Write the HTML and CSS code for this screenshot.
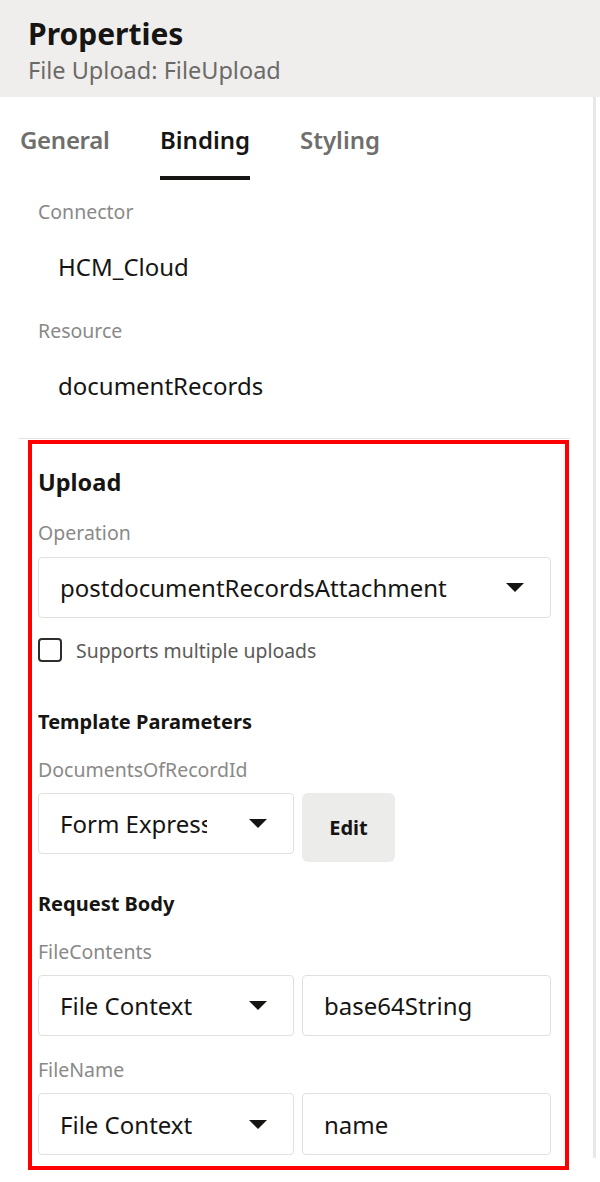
FILE: index.html
```html
<!DOCTYPE html>
<html>
<head>
<meta charset="utf-8">
<link rel="stylesheet" href="styles.css">
</head>
<body>
<div class="header">
  <div class="title">Properties</div>
  <div class="subtitle">File Upload: FileUpload</div>
</div>
<div class="tabs">
  <div class="tab">General</div>
  <div class="tab active">Binding</div>
  <div class="tab">Styling</div>
</div>
<div class="binding">
  <div class="field">
    <div class="label first">Connector</div>
    <div class="value">HCM_Cloud</div>
  </div>
  <div class="field">
    <div class="label">Resource</div>
    <div class="value">documentRecords</div>
  </div>
  <div class="divider"></div>
  <div class="upload">
    <div class="section-title">Upload</div>
    <div class="label op">Operation</div>
    <div class="select wide">
      <span class="select-text">postdocumentRecordsAttachment</span>
      <svg class="arrow" width="18" height="9" viewBox="0 0 18 9"><polygon points="0,0 18,0 9,9" fill="#161513"/></svg>
    </div>
    <label class="check-row">
      <span class="checkbox"></span>
      <span class="check-label">Supports multiple uploads</span>
    </label>
    <div class="sub-title tp">Template Parameters</div>
    <div class="label sm">DocumentsOfRecordId</div>
    <div class="row">
      <div class="select half">
        <span class="select-text clip">Form Expression</span>
        <svg class="arrow" width="18" height="9" viewBox="0 0 18 9"><polygon points="0,0 18,0 9,9" fill="#161513"/></svg>
      </div>
      <div class="button">Edit</div>
    </div>
    <div class="sub-title rb">Request Body</div>
    <div class="label sm">FileContents</div>
    <div class="row">
      <div class="select half">
        <span class="select-text">File Context</span>
        <svg class="arrow" width="18" height="9" viewBox="0 0 18 9"><polygon points="0,0 18,0 9,9" fill="#161513"/></svg>
      </div>
      <div class="input">base64String</div>
    </div>
    <div class="label sm fn">FileName</div>
    <div class="row last">
      <div class="select half">
        <span class="select-text">File Context</span>
        <svg class="arrow" width="18" height="9" viewBox="0 0 18 9"><polygon points="0,0 18,0 9,9" fill="#161513"/></svg>
      </div>
      <div class="input">name</div>
    </div>
  </div>
</div>
<div class="scroll-track"></div>
</body>
</html>
```

FILE: styles.css
```css
* { box-sizing: border-box; }
html, body { margin: 0; padding: 0; background: #fff; }
body {
  width: 600px;
  height: 1182px;
  position: relative;
  font-family: "Noto Sans", "Open Sans", sans-serif;
  color: #161513;
  overflow: hidden;
}
.header {
  height: 97px;
  background: #efeeec;
  padding: 15px 28px 0 28px;
}
.title {
  font-size: 30px;
  font-weight: 700;
  line-height: 38px;
  color: #161513;
}
.subtitle {
  font-size: 23.5px;
  line-height: 32px;
  margin-top: 1px;
  color: #6b6a68;
}
.tabs {
  display: grid;
  grid-template-columns: repeat(3, 140px);
  justify-items: start;
  padding-left: 20px;
  height: 83px;
}
.tab {
  font-size: 24px;
  font-weight: 600;
  line-height: 30px;
  padding-top: 28px;
  padding-bottom: 21px;
  color: #6f6e6c;
  border-bottom: 4px solid transparent;
}
.tab:first-child { letter-spacing: -0.3px; }
.tab.active {
  color: #161513;
  border-bottom-color: #161513;
}
.binding {
  margin-left: 18px;
  width: 552px;
}
.field { padding-left: 20px; }
.label {
  font-size: 19.5px;
  line-height: 24px;
  color: #8a8988;
  margin-top: 37px;
}
.label.first { margin-top: 20px; }
.value {
  font-size: 24px;
  line-height: 30px;
  margin-top: 28px;
  padding-left: 20px;
}
.divider {
  height: 1px;
  background: #e4e3e1;
  margin-top: 37px;
}
.upload {
  margin: 1px 1px 0 10px;
  border: 4px solid #ff0000;
  padding: 24px 14px 11px 6px;
}
.section-title {
  font-size: 23.5px;
  font-weight: 700;
  line-height: 28px;
}
.label.op { margin-top: 25px; }
.label.sm { margin-top: 23px; }
.label.fn { margin-top: 22px; }
.select {
  display: flex;
  align-items: center;
  justify-content: space-between;
  border: 1px solid #e2e0dd;
  border-radius: 4px;
  height: 61px;
  padding: 0 26px 0 21px;
  background: #fff;
}
.select.wide { margin-top: 12px; }
.select-text {
  font-size: 24px;
  white-space: nowrap;
}
.select-text.clip {
  width: 147px;
  overflow: hidden;
}
.arrow { flex: none; }
.check-row {
  display: flex;
  align-items: center;
  gap: 14px;
  margin-top: 20px;
  height: 24px;
}
.checkbox {
  width: 24px;
  height: 24px;
  border: 2px solid #2e2d2b;
  border-radius: 4px;
  flex: none;
}
.check-label {
  font-size: 19.4px;
  color: #5b5a58;
}
.sub-title {
  font-size: 20px;
  font-weight: 700;
  line-height: 26px;
}
.sub-title.tp { margin-top: 47px; }
.sub-title.rb { margin-top: 29px; }
.row {
  display: flex;
  align-items: flex-start;
  gap: 8px;
  margin-top: 11px;
}
.row .select.half { width: 256px; }
.button {
  width: 93px;
  height: 69px;
  border-radius: 6px;
  background: #ececeb;
  font-size: 20px;
  font-weight: 700;
  display: flex;
  align-items: center;
  justify-content: center;
}
.input {
  width: 249px;
  height: 61px;
  border: 1px solid #e2e0dd;
  border-radius: 4px;
  padding-left: 21px;
  font-size: 24px;
  display: flex;
  align-items: center;
}
.row.last .select, .row.last .input { height: 62px; }
.scroll-track {
  position: absolute;
  top: 97px;
  left: 593px;
  width: 3px;
  height: 1061px;
  background: #e9e8e6;
}
```
